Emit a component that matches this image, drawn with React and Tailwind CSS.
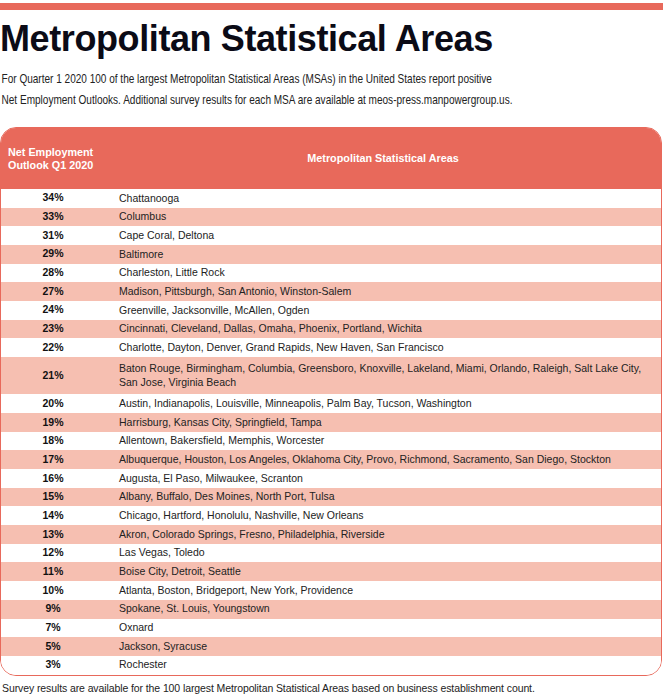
import React from 'react';

// Q1 2020 outlook by MSA
const rows = [
  ['34%', 'Chattanooga'],
  ['33%', 'Columbus'],
  ['31%', 'Cape Coral, Deltona'],
  ['29%', 'Baltimore'],
  ['28%', 'Charleston, Little Rock'],
  ['27%', 'Madison, Pittsburgh, San Antonio, Winston-Salem'],
  ['24%', 'Greenville, Jacksonville, McAllen, Ogden'],
  ['23%', 'Cincinnati, Cleveland, Dallas, Omaha, Phoenix, Portland, Wichita'],
  ['22%', 'Charlotte, Dayton, Denver, Grand Rapids, New Haven, San Francisco'],
  ['21%', 'Baton Rouge, Birmingham, Columbia, Greensboro, Knoxville, Lakeland, Miami, Orlando, Raleigh, Salt Lake City, San Jose, Virginia Beach'],
  ['20%', 'Austin, Indianapolis, Louisville, Minneapolis, Palm Bay, Tucson, Washington'],
  ['19%', 'Harrisburg, Kansas City, Springfield, Tampa'],
  ['18%', 'Allentown, Bakersfield, Memphis, Worcester'],
  ['17%', 'Albuquerque, Houston, Los Angeles, Oklahoma City, Provo, Richmond, Sacramento, San Diego, Stockton'],
  ['16%', 'Augusta, El Paso, Milwaukee, Scranton'],
  ['15%', 'Albany, Buffalo, Des Moines, North Port, Tulsa'],
  ['14%', 'Chicago, Hartford, Honolulu, Nashville, New Orleans'],
  ['13%', 'Akron, Colorado Springs, Fresno, Philadelphia, Riverside'],
  ['12%', 'Las Vegas, Toledo'],
  ['11%', 'Boise City, Detroit, Seattle'],
  ['10%', 'Atlanta, Boston, Bridgeport, New York, Providence'],
  ['9%', 'Spokane, St. Louis, Youngstown'],
  ['7%', 'Oxnard'],
  ['5%', 'Jackson, Syracuse'],
  ['3%', 'Rochester'],
];

export default function App() {
  return (
    <div className="w-[663px] h-[694px] overflow-hidden bg-white pt-[3px] text-[#111] font-['Liberation_Sans',Arial,sans-serif]">
      <div className="h-[7px] bg-[#E8695B]" />

      <h1 className="mt-[11px] text-[36px] leading-[36px] font-bold tracking-[-0.4px] text-[#0b0b16]">
        Metropolitan Statistical Areas
      </h1>

      {/* source face is a condensed grotesk, squeeze Arial to match */}
      <p className="mt-[11px] pl-[2px] whitespace-nowrap origin-left scale-x-[0.772] text-[13px] leading-[21px] text-[#222]">
        For Quarter 1 2020 100 of the largest Metropolitan Statistical Areas (MSAs) in the United States report positive
        <br />
        Net Employment Outlooks. Additional survey results for each MSA are available at meos-press.manpowergroup.us.
      </p>

      <div className="mt-[17px] w-[662px] rounded-[16px] border-[1.5px] border-[#E8695B] overflow-hidden">
        <div className="flex h-[61px] items-center bg-[#E8695B] text-white font-bold text-[10.8px]">
          <div className="w-[104px] pl-[7px] leading-[13px]">
            Net Employment
            <br />
            Outlook Q1 2020
          </div>
          <div className="flex-1 text-center">Metropolitan Statistical Areas</div>
        </div>

        {rows.map(([pct, cities], i) => (
          <div
            key={pct}
            className={`flex items-center text-[10.5px] ${pct === '21%' ? 'h-[37.4px]' : 'h-[18.68px]'} ${i % 2 ? 'bg-[#F6BFB1]' : 'bg-white'}`}
          >
            <div className="w-[104px] text-center font-bold">{pct}</div>
            <div className="flex-1 pl-[14px] pr-[12px] leading-[13.4px] text-[#222]">{cities}</div>
          </div>
        ))}
      </div>

      <p className="mt-[6px] pl-[2px] whitespace-nowrap text-[10.5px] leading-[12px] tracking-[-0.1px] text-[#222]">
        Survey results are available for the 100 largest Metropolitan Statistical Areas based on business establishment count.
      </p>
    </div>
  );
}
